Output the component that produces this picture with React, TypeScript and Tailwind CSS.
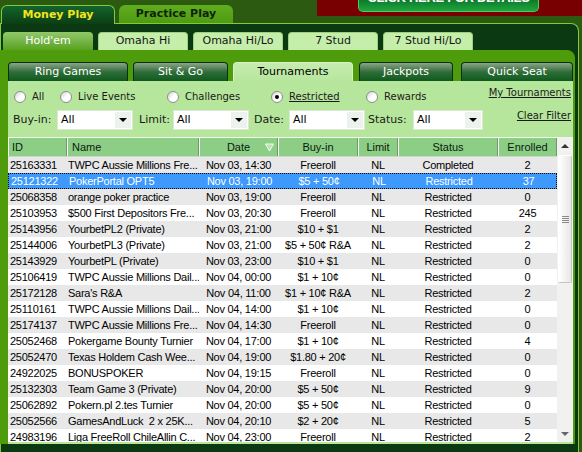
import React from "react";

type Row = [string, string, string, string, string, string, string];

const rows: Row[] = [
  ["25163331", "TWPC Aussie Millions Fre...", "Nov 03, 14:30", "Freeroll", "NL", "Completed", "2"],
  ["25121322", "PokerPortal OPT5", "Nov 03, 19:00", "$5 + 50¢", "NL", "Restricted", "37"],
  ["25068358", "orange poker practice", "Nov 03, 19:00", "Freeroll", "NL", "Restricted", "0"],
  ["25103953", "$500 First Depositors Fre...", "Nov 03, 20:30", "Freeroll", "NL", "Restricted", "245"],
  ["25143956", "YourbetPL2 (Private)", "Nov 03, 21:00", "$10 + $1", "NL", "Restricted", "2"],
  ["25144006", "YourbetPL3 (Private)", "Nov 03, 21:00", "$5 + 50¢ R&A", "NL", "Restricted", "2"],
  ["25143929", "YourbetPL (Private)", "Nov 03, 23:00", "$10 + $1", "NL", "Restricted", "0"],
  ["25106419", "TWPC Aussie Millions Dail...", "Nov 04, 00:00", "$1 + 10¢", "NL", "Restricted", "0"],
  ["25172128", "Sara's R&A", "Nov 04, 11:00", "$1 + 10¢ R&A", "NL", "Restricted", "2"],
  ["25110161", "TWPC Aussie Millions Dail...", "Nov 04, 14:00", "$1 + 10¢", "NL", "Restricted", "0"],
  ["25174137", "TWPC Aussie Millions Fre...", "Nov 04, 14:30", "Freeroll", "NL", "Restricted", "0"],
  ["25052468", "Pokergame Bounty Turnier", "Nov 04, 17:00", "$1 + 10¢", "NL", "Restricted", "4"],
  ["25052470", "Texas Holdem Cash Wee...", "Nov 04, 19:00", "$1.80 + 20¢", "NL", "Restricted", "0"],
  ["24922025", "BONUSPOKER", "Nov 04, 19:15", "Freeroll", "NL", "Restricted", "0"],
  ["25132303", "Team Game 3 (Private)", "Nov 04, 20:00", "$5 + 50¢", "NL", "Restricted", "9"],
  ["25062892", "Pokern.pl 2.tes Turnier", "Nov 04, 20:00", "$5 + 50¢", "NL", "Restricted", "0"],
  ["25052566", "GamesAndLuck  2 x 25K...", "Nov 04, 20:10", "$2 + 20¢", "NL", "Restricted", "5"],
  ["24983196", "Liga FreeRoll ChileAllin C...", "Nov 04, 23:00", "Freeroll", "NL", "Restricted", "2"],
];

const cellCls = [
  "w-[59px] pl-[2px] text-left",
  "w-[132px] pl-[1px] text-left",
  "w-[79px] text-center",
  "w-[80px] text-center",
  "w-[40px] text-center",
  "w-[100px] text-center",
  "w-[59px] text-center",
];

function Radio({ checked }: { checked?: boolean }) {
  return (
    <span className="w-[12px] h-[12px] rounded-full border border-[#8d8d8d] bg-gradient-to-br from-[#cfcfcf] via-white to-white flex items-center justify-center shrink-0">
      {checked && <span className="w-[4px] h-[4px] rounded-full bg-black" />}
    </span>
  );
}

function RadioItem({ label, w, checked, underline }: { label: string; w: string; checked?: boolean; underline?: boolean }) {
  return (
    <div className={`${w} flex items-center gap-[6px] shrink-0`}>
      <Radio checked={checked} />
      <span className={`text-[10px] leading-[12px] text-[#1a1a1a] ${underline ? "underline" : ""}`}>{label}</span>
    </div>
  );
}

function Select({ w }: { w: string }) {
  return (
    <div className={`${w} h-[20px] bg-white border border-[#dbe8d4] flex items-center shrink-0`}>
      <span className="flex-1 pl-[3px] text-[11px] text-black leading-[18px]">All</span>
      <span className="w-[16px] h-[16px] mr-[1px] bg-[#eef2ee] flex items-center justify-center">
        <span className="w-0 h-0 border-l-[4px] border-r-[4px] border-t-[4px] border-l-transparent border-r-transparent border-t-black" />
      </span>
    </div>
  );
}

function GameTab({ label, active }: { label: string; active?: boolean }) {
  return active ? (
    <div className="w-[90px] h-[18px] rounded-t-[4px] bg-gradient-to-b from-[#93c86a] to-[#58a21a] text-white text-[11px] flex items-center justify-center">
      {label}
    </div>
  ) : (
    <div className="w-[90px] h-[18px] rounded-t-[4px] bg-[#c4eeaa] border-t border-l border-r border-[#9fd07e] text-[#151515] text-[11px] flex items-center justify-center">
      {label}
    </div>
  );
}

function SubTab({ label, w, active }: { label: string; w: string; active?: boolean }) {
  return active ? (
    <div className={`${w} h-[19px] rounded-t-[4px] bg-gradient-to-b from-[#c6ecb0] to-[#b7e69d] border-t border-l border-r border-[#d6f2c6] text-black text-[11px] flex items-center justify-center shrink-0`}>
      {label}
    </div>
  ) : (
    <div className={`${w} h-[19px] rounded-t-[4px] bg-gradient-to-b from-[#8aa58a] via-[#2f6d39] to-[#0c5a1d] border-t border-l border-r border-[#083010] text-white text-[11px] flex items-center justify-center shrink-0`}>
      {label}
    </div>
  );
}

function HeaderCell({ label, w, left, pl, sort }: { label: string; w: string; left?: boolean; pl?: string; sort?: boolean }) {
  return (
    <div className={`${w} h-full relative border-l border-l-[#f4fbf0] border-r border-r-[#74966f] flex items-center ${left ? `justify-start ${pl}` : "justify-center"} shrink-0`}>
      <span>{label}</span>
      {sort && (
        <svg className="absolute right-[3px] top-[5px]" width="9" height="9" viewBox="0 0 9 9">
          <path d="M0.5 1 L8.5 1 L4.5 8 Z" fill="#b9e2b0" stroke="#f2fbef" strokeWidth="1" />
        </svg>
      )}
    </div>
  );
}

export default function App() {
  return (
    <div className="w-[582px] h-[452px] overflow-hidden bg-[#2c5a10] flex flex-col font-['DejaVu_Sans',Verdana,sans-serif]">
      {/* top row */}
      <div className="h-[23px] flex shrink-0">
        <div className="flex items-end pl-[1px] gap-[4px]">
          <div className="relative z-10 -mb-px w-[114px] h-[19px] rounded-t-[6px] border border-b-0 border-[#7ccc3c] bg-gradient-to-b from-[#13652b] to-[#0b3e14] text-[#f6e51c] font-bold text-[11px] flex items-center justify-center">
            Money Play
          </div>
          <div className="w-[114px] h-[18px] rounded-t-[6px] bg-gradient-to-b from-[#5fae1e] to-[#4f9a12] text-[#0f220b] font-bold text-[11px] flex items-center justify-center">
            Practice Play
          </div>
        </div>
        <div className="ml-auto w-[265px] h-[16px] bg-[#780000] flex">
          <div className="ml-[41px] w-[181px] h-[12px] rounded-b-[5px] bg-gradient-to-b from-[#0e7a2a] to-[#1fa540] border border-t-0 border-[#4ccd5e] overflow-hidden flex justify-center">
            <span className="-mt-[10px] text-[13px] leading-[15px] font-bold text-white font-['Liberation_Sans',Arial,sans-serif] tracking-[-0.3px]">
              CLICK HERE FOR DETAILS
            </span>
          </div>
        </div>
      </div>

      {/* dark panel */}
      <div className="h-[429px] w-[579px] bg-[#0b3a12] border-t border-r border-l border-[#7ccc3c] rounded-tr-[8px] flex flex-col shrink-0">
        <div className="h-[26px] pt-[8px] pl-[2px] flex gap-[5px] shrink-0">
          <GameTab label="Hold'em" active />
          <GameTab label="Omaha Hi" />
          <GameTab label="Omaha Hi/Lo" />
          <GameTab label="7 Stud" />
          <GameTab label="7 Stud Hi/Lo" />
        </div>

        {/* green panel */}
        <div className="h-[394px] w-[575px] -ml-px bg-[#4e9c0b] rounded-tr-[8px] flex flex-col shrink-0">
          <div className="h-[31px] pt-[12px] pl-[8px] flex shrink-0">
            <SubTab label="Ring Games" w="w-[120px]" />
            <div className="w-[5px]" />
            <SubTab label="Sit & Go" w="w-[95px]" />
            <div className="w-[5px]" />
            <SubTab label="Tournaments" w="w-[120px]" active />
            <div className="w-[6px]" />
            <SubTab label="Jackpots" w="w-[94px]" />
            <div className="w-[8px]" />
            <SubTab label="Quick Seat" w="w-[112px]" />
          </div>

          {/* light panel */}
          <div className="ml-[8px] w-[565px] h-[363px] bg-[#b6e69c] flex flex-col">
            <div className="h-[56px] flex shrink-0">
              <div className="flex flex-col">
                <div className="pt-[10px] pl-[6px] flex h-[22px]">
                  <RadioItem label="All" w="w-[46px]" />
                  <RadioItem label="Live Events" w="w-[107px]" />
                  <RadioItem label="Challenges" w="w-[104px]" />
                  <RadioItem label="Restricted" w="w-[95px]" checked underline />
                  <RadioItem label="Rewards" w="w-[80px]" />
                </div>
                <div className="mt-[7px] pl-[5px] flex items-center h-[20px] text-[11px] text-[#1a1a1a]">
                  <span className="w-[44px] shrink-0">Buy-in:</span>
                  <Select w="w-[76px]" />
                  <span className="w-[40px] pl-[6px] shrink-0">Limit:</span>
                  <Select w="w-[76px]" />
                  <span className="w-[40px] pl-[5px] shrink-0">Date:</span>
                  <Select w="w-[76px]" />
                  <span className="w-[48px] pl-[3px] shrink-0">Status:</span>
                  <Select w="w-[70px]" />
                </div>
              </div>
              <div className="ml-auto pr-[2px] pt-[6px] flex flex-col items-end text-[10px] leading-[12px] text-[#1a1a1a]">
                <span className="underline">My Tournaments</span>
                <span className="underline mt-[11px]">Clear Filter</span>
              </div>
            </div>

            {/* table */}
            <div className="flex h-[305px] font-['Liberation_Sans',Arial,sans-serif] text-[11px]">
              <div className="w-[549px] flex flex-col shrink-0">
                <div className="h-[20px] flex bg-[#8cce86] border-t border-t-[#f1f9ee] border-b border-b-[#c9d9c5] text-[#0c1a0c] shrink-0">
                  <HeaderCell label="ID" w="w-[59px]" left pl="pl-[3px]" />
                  <HeaderCell label="Name" w="w-[132px]" left pl="pl-[4px]" />
                  <HeaderCell label="Date" w="w-[79px]" sort />
                  <HeaderCell label="Buy-in" w="w-[80px]" />
                  <HeaderCell label="Limit" w="w-[40px]" />
                  <HeaderCell label="Status" w="w-[100px]" />
                  <HeaderCell label="Enrolled" w="w-[59px]" />
                </div>
                <div className="h-[285px] overflow-hidden flex flex-col tracking-[-0.25px]">
                  {rows.map((r, i) => {
                    const selected = i === 1;
                    const bg = selected
                      ? "bg-[#3d99fc] text-white border border-dotted border-black"
                      : i % 2 === 0
                      ? "bg-[#e8e8e8] text-black"
                      : "bg-white text-black";
                    return (
                      <div key={i} className={`h-[16px] flex items-center shrink-0 ${bg}`}>
                        {r.map((c, j) => (
                          <div key={j} className={`${cellCls[j]} whitespace-pre overflow-hidden shrink-0 leading-[14px]`}>
                            {c}
                          </div>
                        ))}
                      </div>
                    );
                  })}
                </div>
              </div>
              {/* scrollbar */}
              <div className="w-[16px] h-[305px] bg-[#f1f2f0] flex flex-col items-center shrink-0">
                <div className="h-[18px] flex items-center justify-center">
                  <span className="w-0 h-0 border-l-[4px] border-r-[4px] border-b-[4px] border-l-transparent border-r-transparent border-b-[#333]" />
                </div>
                <div className="w-[14px] h-[128px] rounded-[2px] bg-gradient-to-r from-white to-[#e6e6e6] border border-[#c4c4c4] border-t-white border-l-white flex flex-col items-center justify-center gap-[1px]">
                  <span className="w-[7px] h-px bg-[#8a8a8a]" />
                  <span className="w-[7px] h-px bg-[#8a8a8a]" />
                  <span className="w-[7px] h-px bg-[#8a8a8a]" />
                  <span className="w-[7px] h-px bg-[#8a8a8a]" />
                </div>
                <div className="flex-1" />
                <div className="h-[16px] flex items-center justify-center">
                  <span className="w-0 h-0 border-l-[4px] border-r-[4px] border-t-[4px] border-l-transparent border-r-transparent border-t-[#666]" />
                </div>
              </div>
            </div>
          </div>
        </div>
      </div>
    </div>
  );
}
